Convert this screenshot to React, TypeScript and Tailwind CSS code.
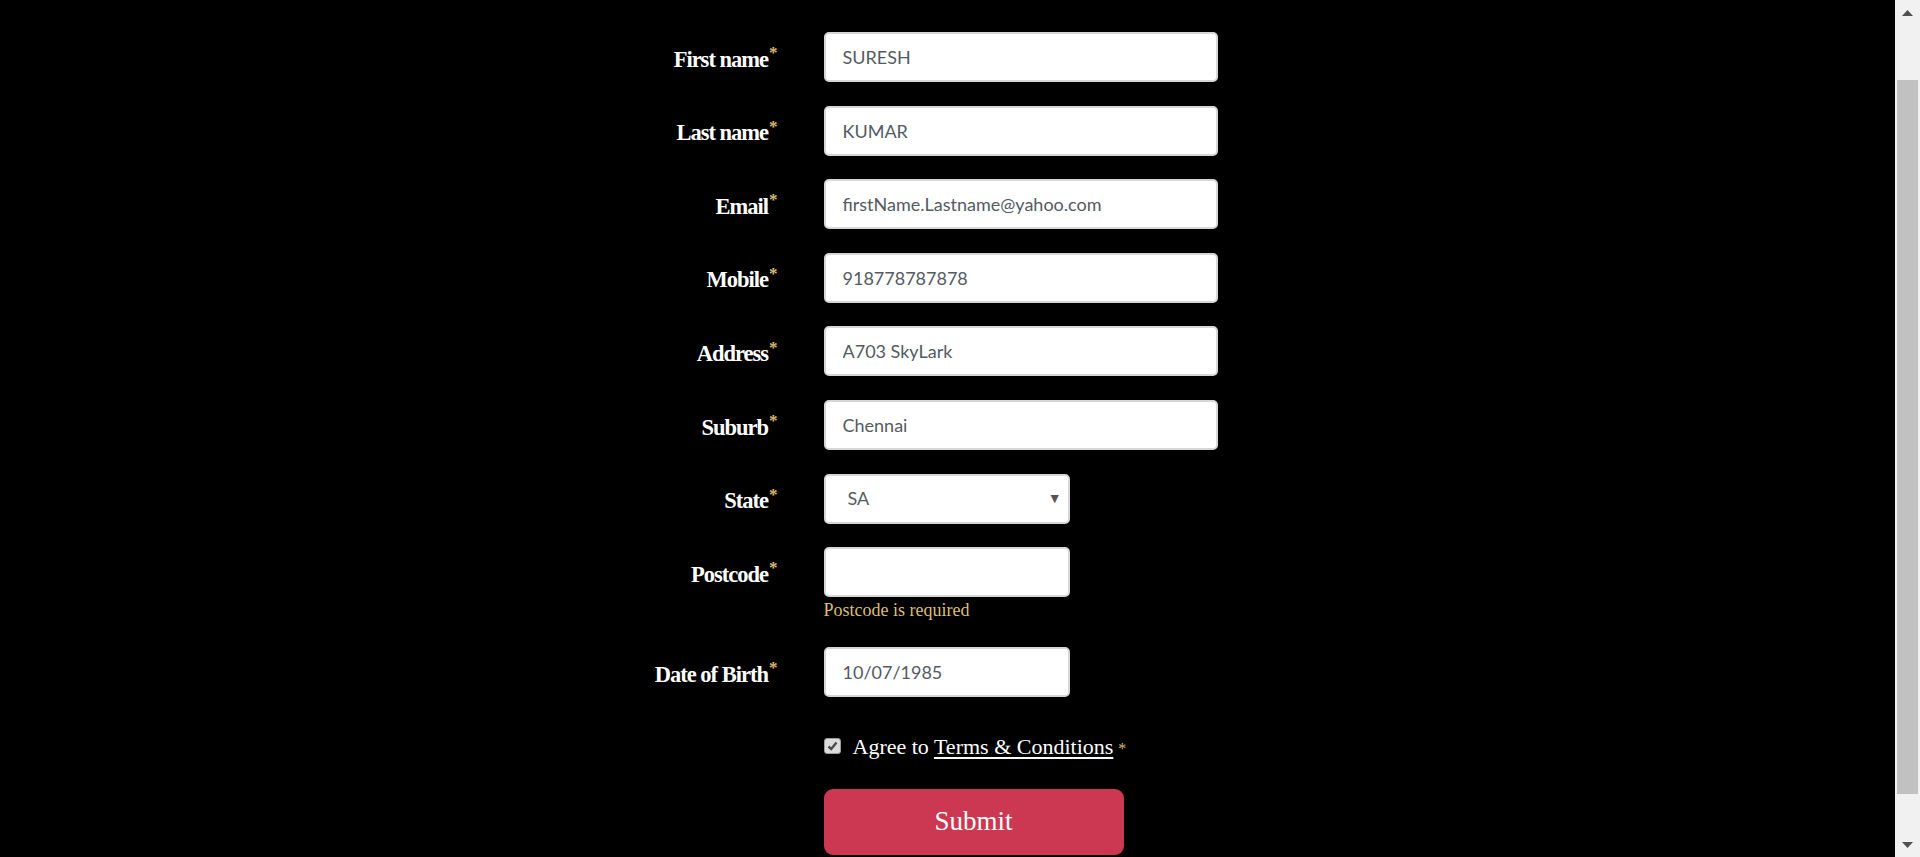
import React, { useState } from 'react';

type Field = {
  label: string;
  name: string;
  value: string;
  width: string;
};

const fields: Field[] = [
  { label: 'First name', name: 'firstName', value: 'SURESH', width: 'w-[394px]' },
  { label: 'Last name', name: 'lastName', value: 'KUMAR', width: 'w-[394px]' },
  { label: 'Email', name: 'email', value: 'firstName.Lastname@yahoo.com', width: 'w-[394px]' },
  { label: 'Mobile', name: 'mobile', value: '918778787878', width: 'w-[394px]' },
  { label: 'Address', name: 'address', value: 'A703 SkyLark', width: 'w-[394px]' },
  { label: 'Suburb', name: 'suburb', value: 'Chennai', width: 'w-[394px]' },
];

const States = ['ACT', 'NSW', 'NT', 'QLD', 'SA', 'TAS', 'VIC', 'WA'];

const labelFont = { fontFamily: '"Liberation Serif", serif' };

const Label = ({ text }: { text: string }) => (
  <label
    className="block w-[176px] pr-[46px] pt-[5px] text-right text-[22.5px] font-bold tracking-[-1px] text-white"
    style={labelFont}
  >
    {text}
    <span className="ml-[1px] align-super text-[17px] leading-none tracking-normal text-[#d9b872]">*</span>
  </label>
);

const inputClass =
  'h-[50px] rounded-[5px] border-2 border-[#d6d6d6] bg-white px-[17px] text-[18px] text-[#555a63] outline-none font-["Lato",sans-serif]';

const Scrollbar = () => (
  <div className="flex h-full w-[25px] flex-col bg-[#f1f1f1]">
    <div className="flex h-[25px] items-center justify-center">
      <svg width="11" height="6" viewBox="0 0 11 6">
        <polygon points="5.5,0 11,6 0,6" fill="#505050" />
      </svg>
    </div>
    <div className="flex-1 px-[2px] pt-[55px]">
      <div className="h-[714px] w-full bg-[#c1c1c1]" />
    </div>
    <div className="flex h-[25px] items-center justify-center">
      <svg width="11" height="6" viewBox="0 0 11 6">
        <polygon points="0,0 11,0 5.5,6" fill="#505050" />
      </svg>
    </div>
  </div>
);

const App = () => {
  const [values, setValues] = useState<Record<string, string>>(
    Object.fromEntries(fields.map(f => [f.name, f.value]))
  );
  const [state, setState] = useState('SA');
  const [postcode, setPostcode] = useState('');
  const [dob, setDob] = useState('10/07/1985');
  const [agree, setAgree] = useState(true);

  const handleChange = (e: React.ChangeEvent<HTMLInputElement>) => {
    const { name, value } = e.target;
    setValues(prev => ({ ...prev, [name]: value }));
  };

  return (
    <div className="flex h-[857px] w-full overflow-hidden bg-black">
      <div className="flex-1">
        <form className="mx-auto w-[600px] pt-[32px]" onSubmit={e => e.preventDefault()}>
          {fields.map(field => (
            <div key={field.name} className="mb-[23.6px] flex items-center">
              <Label text={field.label} />
              <input
                name={field.name}
                value={values[field.name]}
                onChange={handleChange}
                className={`${inputClass} ${field.width}`}
              />
            </div>
          ))}

          <div className="mb-[23.6px] flex items-center">
            <Label text="State" />
            <div className="relative w-[246px]">
              <select
                value={state}
                onChange={e => setState(e.target.value)}
                className={`${inputClass} w-full appearance-none pl-[22px]`}
              >
                {States.map(s => (
                  <option key={s} value={s}>{s}</option>
                ))}
              </select>
              <span className="pointer-events-none absolute right-[8px] top-[13px] text-[14px] text-[#555]">▼</span>
            </div>
          </div>

          <div className="flex items-center">
            <Label text="Postcode" />
            <input
              name="postcode"
              value={postcode}
              onChange={e => setPostcode(e.target.value)}
              className={`${inputClass} w-[246px]`}
            />
          </div>
          <div className="mb-[24px] flex">
            <div className="w-[176px]" />
            <p className="mt-[1px] text-[18px] leading-[25px] text-[#dcbd78]" style={labelFont}>
              Postcode is required
            </p>
          </div>

          <div className="mb-[24px] flex items-center">
            <Label text="Date of Birth" />
            <input
              name="dob"
              value={dob}
              onChange={e => setDob(e.target.value)}
              className={`${inputClass} w-[246px]`}
            />
          </div>

          <div className="mb-[18px] flex h-[50px] items-center">
            <div className="w-[176px]" />
            <button
              type="button"
              onClick={() => setAgree(!agree)}
              className="mr-[12px] flex h-[16px] w-[17px] items-center justify-center rounded-[3px] border border-[#9a9a9a] bg-[#dcdcdc]"
            >
              {agree && (
                <svg width="11" height="10" viewBox="0 0 11 10">
                  <path d="M1.5 5.5 L4.2 8 L9.5 1.5" stroke="#4a4a4a" strokeWidth="2.4" fill="none" />
                </svg>
              )}
            </button>
            <span className="text-[22px] text-white" style={labelFont}>
              Agree to <a href="#" className="underline underline-offset-[3px]">Terms &amp; Conditions</a>
              <span className="ml-[5px] text-[16px] text-[#d9b872]">*</span>
            </span>
          </div>

          <div className="flex">
            <div className="w-[176px]" />
            <button
              type="submit"
              className="h-[66px] w-[300px] rounded-[9px] bg-[#cc3752] pb-[2px] text-[27px] text-white"
              style={labelFont}
            >
              Submit
            </button>
          </div>
        </form>
      </div>
      <Scrollbar />
    </div>
  );
};

export default App;
